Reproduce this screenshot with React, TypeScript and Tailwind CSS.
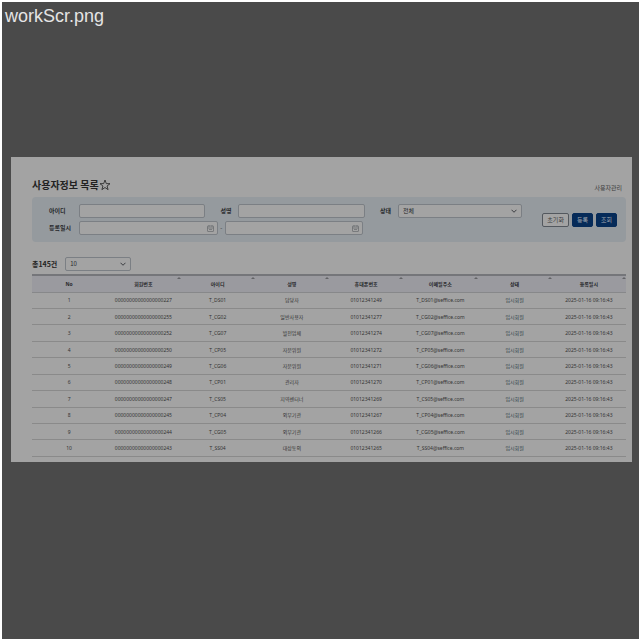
import type { ReactNode } from "react";

const kr = "font-['Noto_Sans_CJK_KR',sans-serif]";

const columns = ["No", "회원번호", "아이디", "성명", "휴대폰번호", "이메일주소", "상태", "등록일시"];

const users = [
  ["227", "T_DS01", "담당자", "249"],
  ["255", "T_CG02", "일반사용자", "277"],
  ["252", "T_CG07", "발전업체", "274"],
  ["250", "T_CP05", "자문위원", "272"],
  ["249", "T_CG06", "자문위원", "271"],
  ["248", "T_CP01", "관리자", "270"],
  ["247", "T_CS05", "지역센터너", "269"],
  ["245", "T_CP04", "외부기관", "267"],
  ["244", "T_CG05", "외부기관", "266"],
  ["243", "T_SS04", "대상동의", "265"],
];

function Calendar() {
  return (
    <svg className="h-[7px] w-[7px] shrink-0" viewBox="0 0 14 14" fill="none" stroke="#5c5f63" strokeWidth="1.2" aria-hidden="true">
      <rect x="1" y="2" width="12" height="11" rx="1" />
      <path d="M1 6h12M4 0.5v3M10 0.5v3M4 9h6" />
    </svg>
  );
}

function Chevron() {
  return (
    <svg className="pointer-events-none absolute right-[5px] h-[6px] w-[6px]" viewBox="0 0 12 12" fill="none" stroke="#303236" strokeWidth="1.8" aria-hidden="true">
      <path d="M1 3.5l5 5 5-5" />
    </svg>
  );
}

const label = "shrink-0 text-[6px] leading-[8px] font-bold text-[#25272a]";
const box = "flex h-[14px] items-center rounded-[2px] border border-[#7b7f84] bg-[#a3a3a3]";
const field = "min-w-0 flex-1 bg-transparent px-1 text-[6px] leading-[8px] outline-none";
const selectStyle = "h-[14px] w-full appearance-none rounded-[2px] border border-[#7b7f84] bg-[#a3a3a3] px-1 text-[6px] leading-[8px] text-[#25272a] outline-none";

function DateBox({ id, name }: { id: string; name: string }) {
  return (
    <div className={`${box} flex-1 pr-[3px]`}>
      <input id={id} aria-label={name} className={field} />
      <Calendar />
    </div>
  );
}

function Button({ primary, children }: { primary?: boolean; children: ReactNode }) {
  return (
    <button
      type="button"
      className={`flex h-[14px] items-center justify-center rounded-[2px] border px-1 text-[6px] leading-[8px] whitespace-nowrap ${
        primary ? "border-[#062b59] bg-[#062b59] text-[#a3a9b1]" : "border-[#53585e] bg-[#a3a3a3] text-[#3b3d40]"
      }`}
    >
      {children}
    </button>
  );
}

export default function App() {
  return (
    <div className="flex min-h-screen flex-col border-t-2 border-r border-b border-l-2 border-white bg-[#4a4a4a]">
      <p className="px-[3px] font-['Liberation_Sans',sans-serif] text-[18px] leading-[28px] text-[#e4e4e4]">workScr.png</p>

      <main className={`mt-[127px] mr-[7px] ml-[9px] bg-[#a3a3a3] pt-[21px] pr-[6px] pb-[5px] pl-[21px] text-[#333] ${kr}`}>
        <header className="flex h-[19px] items-start justify-between">
          <div className="flex items-center">
            <h1 className="text-[10px] leading-[14px] font-bold text-[#222]">사용자정보 목록</h1>
            <button type="button" aria-label="즐겨찾기">
              <svg className="block h-[12px] w-[12px]" viewBox="0 0 24 24" fill="none" stroke="#222" strokeWidth="1.6" aria-hidden="true">
                <path d="M12 2l2.6 7.2 7.4.2-5.900 4.600 2.100 7.300L12 17l-6.200 4.300 2.100-7.300L2 9.400l7.400-.2z" />
              </svg>
            </button>
          </div>
          <span className="mt-[6px] mr-1 text-[6px] leading-[8px] text-[#3c3c3c]">사용자관리</span>
        </header>

        <form className="flex h-[45px] items-center rounded-[4px] bg-[#959a9e] pr-[9px] pl-[17px]">
          <div className="flex flex-1 flex-col gap-[3px]">
            <div className="flex items-center">
              <label htmlFor="uid" className={`${label} w-[30px]`}>아이디</label>
              <div className={`${box} flex-1`}><input id="uid" className={field} /></div>
              <label htmlFor="uname" className={`${label} w-[33px] pl-[15px]`}>성명</label>
              <div className={`${box} flex-1`}><input id="uname" className={field} /></div>
              <label htmlFor="state" className={`${label} w-[33px] pl-[15px]`}>상태</label>
              <div className="relative flex flex-1 items-center">
                <select id="state" className={selectStyle}><option>전체</option></select>
                <Chevron />
              </div>
            </div>
            <div className="flex items-center pr-[159px]">
              <label htmlFor="from" className={`${label} w-[30px]`}>등록일시</label>
              <DateBox id="from" name="등록일시 시작" />
              <span className="w-[7px] text-center text-[6px] leading-[8px]">-</span>
              <DateBox id="to" name="등록일시 종료" />
            </div>
          </div>
          <div className="ml-[20px] flex gap-[3px]">
            <Button>초기화</Button>
            <Button primary>등록</Button>
            <Button primary>조회</Button>
          </div>
        </form>

        <div className="mt-[15px] flex items-center gap-[8px]">
          <label htmlFor="size" className="text-[7px] leading-[10px] font-bold text-[#222]">총145건</label>
          <div className="relative flex w-[66px] items-center">
            <select id="size" className={selectStyle}><option>10</option></select>
            <Chevron />
          </div>
        </div>

        <table className="mt-[3px] h-[183px] w-full table-fixed border-collapse text-center font-['Noto_Sans','Noto_Sans_CJK_KR',sans-serif] text-[5px] leading-[8px]">
          <thead>
            <tr className="h-[17px] border-t-2 border-b border-t-[#75767a] border-b-[#87888a] bg-[#9a9a9f]">
              {columns.map((c, i) => (
                <th key={c} scope="col" className="relative p-0 font-bold text-[#26272a]">
                  {c}
                  {i > 0 && (
                    <svg className="absolute top-[1px] right-0 h-[2px] w-[4px]" viewBox="0 0 8 4" fill="#626366" aria-hidden="true">
                      <path d="M4 0l4 4H0z" />
                    </svg>
                  )}
                </th>
              ))}
            </tr>
          </thead>
          <tbody>
            {users.map(([no, id, name, tel], i) => (
              <tr key={no} className="border-b border-[#8a8a8a]">
                <td className="p-0">{i + 1}</td>
                <td className="p-0">00000000000000000{no}</td>
                <td className="p-0">{id}</td>
                <td className="p-0">{name}</td>
                <td className="p-0">01012341{tel}</td>
                <td className="p-0">{id}@seffice.com</td>
                <td className="p-0 text-[#2c4046]">임시회원</td>
                <td className="p-0">2025-01-16 09:16:43</td>
              </tr>
            ))}
          </tbody>
        </table>
      </main>
    </div>
  );
}
